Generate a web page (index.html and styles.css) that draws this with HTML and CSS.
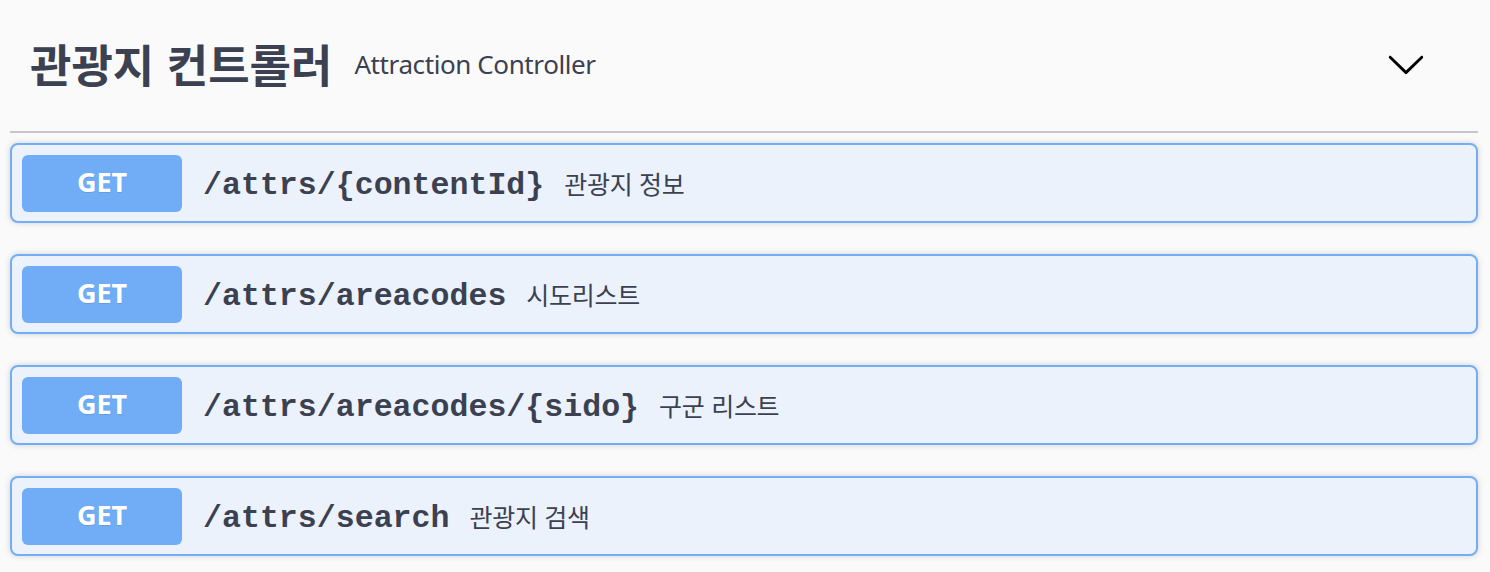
FILE: index.html
```html
<!DOCTYPE html>
<html lang="ko">
<head>
<meta charset="utf-8">
<link rel="stylesheet" href="styles.css">
</head>
<body>
<section class="tag-section">
  <div class="tag-header">
    <h3 class="tag-title">관광지 컨트롤러</h3>
    <span class="tag-desc">Attraction Controller</span>
    <button class="expand" aria-label="collapse">
      <svg width="40" height="40" viewBox="0 0 20 20"><path d="M17.418 6.109c.272-.268.709-.268.979 0s.27.701 0 .969l-7.908 7.83c-.27.268-.707.268-.979 0l-7.908-7.83c-.27-.268-.27-.701 0-.969.271-.268.709-.268.979 0L10 13.25l7.418-7.141z" fill="#000"/></svg>
    </button>
  </div>
  <div class="ops">
    <div class="op">
      <span class="method">GET</span>
      <span class="path">/attrs/{contentId}</span>
      <span class="summary">관광지 정보</span>
    </div>
    <div class="op">
      <span class="method">GET</span>
      <span class="path">/attrs/areacodes</span>
      <span class="summary">시도리스트</span>
    </div>
    <div class="op">
      <span class="method">GET</span>
      <span class="path">/attrs/areacodes/{sido}</span>
      <span class="summary">구군 리스트</span>
    </div>
    <div class="op">
      <span class="method">GET</span>
      <span class="path">/attrs/search</span>
      <span class="summary">관광지 검색</span>
    </div>
  </div>
</section>
</body>
</html>
```

FILE: styles.css
```css
html, body {
  margin: 0;
  padding: 0;
  background: #fafafa;
}
body {
  font-family: "Noto Sans", "Noto Sans CJK KR", sans-serif;
  color: #3b4151;
}
.tag-section {
  padding: 0 12px 0 10px;
}
.tag-header {
  height: 133px;
  box-sizing: border-box;
  display: flex;
  align-items: center;
  padding: 0 52px 4px 20px;
  border-bottom: 2px solid #c6c7cb;
}
.tag-title {
  margin: 0;
  font-family: "Noto Sans CJK KR", sans-serif;
  font-weight: 700;
  font-size: 45px;
  line-height: 1;
}
.tag-desc {
  margin-left: 22px;
  font-family: "Noto Sans", "Noto Sans CJK KR", sans-serif;
  font-size: 26px;
  letter-spacing: -0.4px;
  flex: 1;
}
.expand {
  border: 0;
  background: none;
  padding: 0;
  width: 40px;
  height: 40px;
  display: block;
}
.expand svg { display: block; }
.ops {
  padding-top: 10px;
}
.op {
  display: flex;
  align-items: center;
  height: 80px;
  box-sizing: border-box;
  margin-bottom: 31px;
  padding: 0 10px;
  border: 2px solid #72aef5;
  border-radius: 8px;
  background: #ebf2fb;
  box-shadow: 0 0 6px rgba(0,0,0,0.17);
}
.method {
  width: 160px;
  height: 57px;
  box-sizing: border-box;
  padding-bottom: 4px;
  display: flex;
  align-items: center;
  justify-content: center;
  background: #70adf6;
  border-radius: 6px;
  color: #fff;
  font-family: "Noto Sans", sans-serif;
  font-weight: 700;
  font-size: 27px;
  text-shadow: 0 1px 0 rgba(0,0,0,0.1);
}
.path {
  padding: 4px 20px 0 21px;
  font-family: "Liberation Mono", monospace;
  font-weight: 700;
  font-size: 31.6px;
  color: #3b4151;
}
.summary {
  font-family: "Noto Sans CJK KR", sans-serif;
  font-size: 25px;
  letter-spacing: -0.3px;
  color: #3b4151;
}
```
